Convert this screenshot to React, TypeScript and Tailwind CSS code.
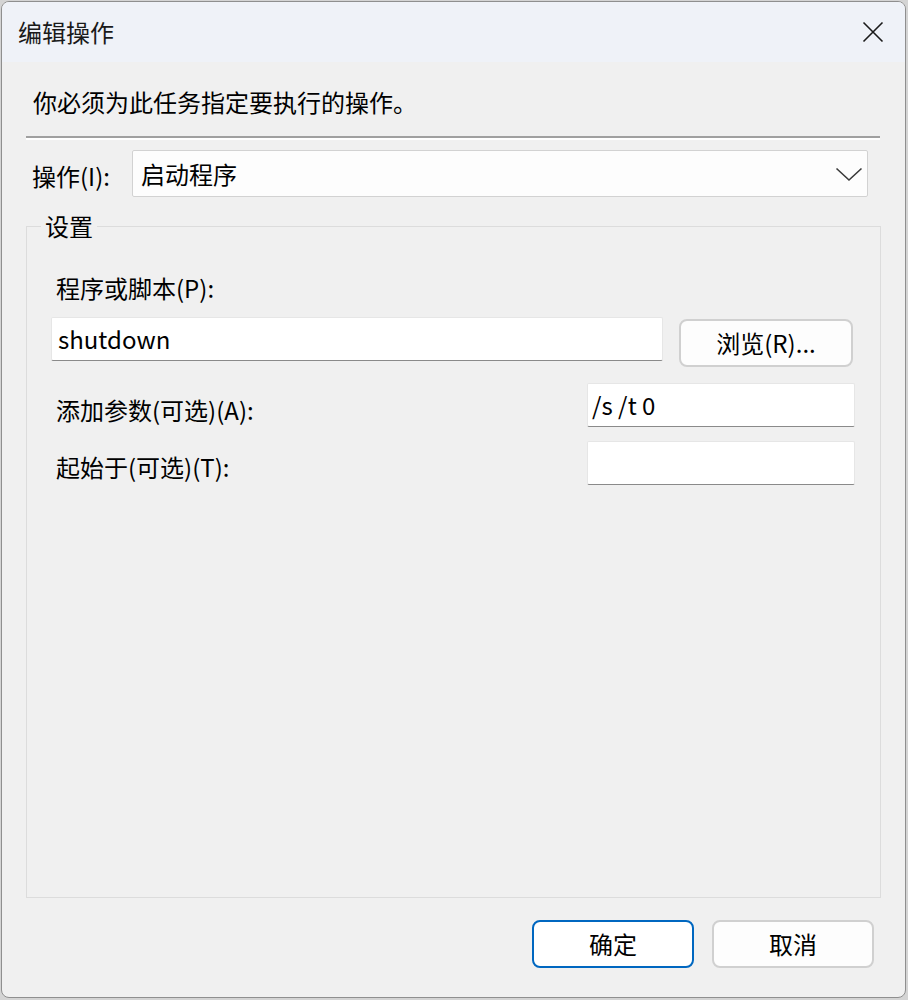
import * as React from "react"

const font = { fontFamily: '"Noto Sans CJK SC", "Noto Sans", sans-serif' }

const TextBox = ({ value, className }: { value?: string; className?: string }) => (
  <div
    className={
      "h-[44px] flex items-center bg-white border border-[#e6e6e6] border-b-[#8a8a8a] rounded-[2px] text-[24px] leading-[28px] text-black " +
      (className ?? "")
    }
  >
    {value}
  </div>
)

export default function App() {
  return (
    <div className="w-[908px] h-[1000px] bg-[#d4d4d4] pt-[1px] pl-[1px] overflow-hidden" style={font}>
      <div className="w-[905px] h-[997px] rounded-[8px] border border-[#8f8f8f] bg-[#f0f0f0] overflow-hidden flex flex-col">
        {/* title bar */}
        <div className="h-[60px] shrink-0 bg-[#eff2f8] flex items-center justify-between pl-[16px] pr-[21px]">
          <span className="text-[24px] leading-[28px] text-[#1a1a1a]">编辑操作</span>
          <svg width="22" height="22" viewBox="0 0 22 22">
            <path d="M1.5 1.5 L20.5 20.5 M20.5 1.5 L1.5 20.5" stroke="#1a1a1a" strokeWidth="1.6" />
          </svg>
        </div>

        {/* body */}
        <div className="flex-1 flex flex-col px-[24px] pt-[26px]">
          <p className="ml-[7px] text-[24px] leading-[28px] text-black">你必须为此任务指定要执行的操作。</p>

          <div className="mt-[20px] mr-[1px]">
            <div className="h-[2px] bg-[#a0a0a0]" />
            <div className="h-[2px] bg-white" />
          </div>

          <div className="mt-[10px] flex items-center">
            <span className="ml-[6px] w-[100px] text-[24px] leading-[28px] text-black pt-[4px]">操作(I):</span>
            <div className="w-[736px] h-[47px] bg-[#fdfdfd] border border-[#d2d2d2] rounded-[2px] flex items-center justify-between pl-[8px] pr-[4px]">
              <span className="text-[24px] leading-[28px] text-black">启动程序</span>
              <svg width="28" height="16" viewBox="0 0 28 16">
                <path d="M1.5 2.5 L14 14 L26.5 2.5" fill="none" stroke="#3a3a3a" strokeWidth="1.6" />
              </svg>
            </div>
          </div>

          <fieldset className="mt-[15px] w-[855px] h-[686px] border border-[#dcdcdc] pl-[24px] pr-[25px]">
            <legend className="-ml-[10px] px-[4px] text-[24px] leading-[28px] text-black">设置</legend>

            <div className="mt-[34px] ml-[5px] text-[24px] leading-[28px] text-black">程序或脚本(P):</div>

            <div className="mt-[15px] flex items-start gap-[16px]">
              <TextBox value="shutdown" className="w-[612px] pl-[6px]" />
              <button className="mt-[2px] w-[174px] h-[48px] bg-[#fdfdfd] border-2 border-[#d0d0d0] rounded-[8px] text-[24px] leading-[28px] text-black">
                浏览(R)...
              </button>
            </div>

            <div className="mt-[16px] flex items-start justify-between">
              <span className="ml-[5px] pt-[13px] text-[24px] leading-[28px] text-black">添加参数(可选)(A):</span>
              <TextBox value="/s /t 0" className="w-[268px] pl-[4px]" />
            </div>

            <div className="mt-[14px] flex items-start justify-between">
              <span className="ml-[5px] pt-[12px] text-[24px] leading-[28px] text-black">起始于(可选)(T):</span>
              <TextBox className="w-[268px]" />
            </div>
          </fieldset>

          <div className="mt-[22px] flex justify-end gap-[18px] pr-[7px]">
            <button className="w-[162px] h-[48px] bg-white border-2 border-[#0067c0] rounded-[8px] text-[24px] leading-[28px] text-black">
              确定
            </button>
            <button className="w-[162px] h-[48px] bg-[#fdfdfd] border-2 border-[#d0d0d0] rounded-[8px] text-[24px] leading-[28px] text-black">
              取消
            </button>
          </div>
        </div>
      </div>
    </div>
  )
}
